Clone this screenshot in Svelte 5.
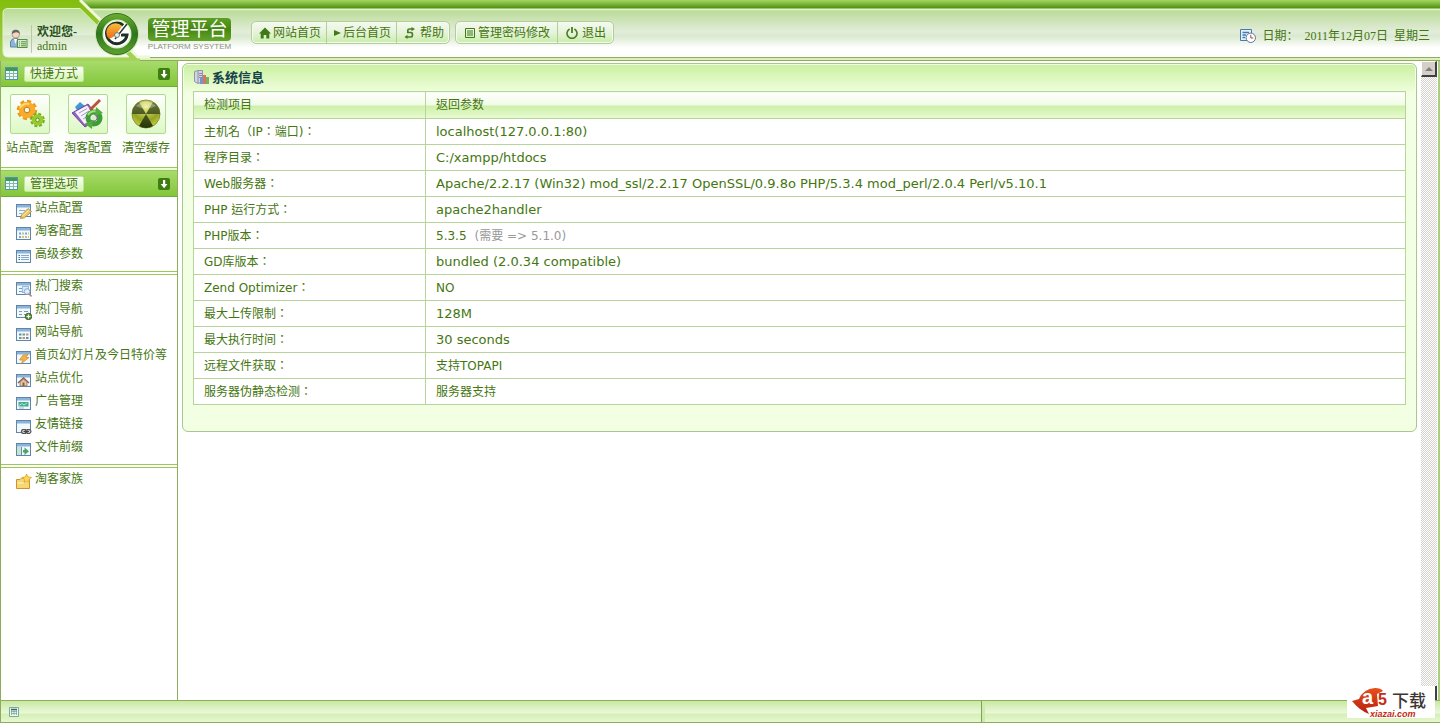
<script>
	const navGroups = [
		[
			{ icon: 'home', label: '网站首页' },
			{ icon: 'play', label: '后台首页' },
			{ icon: 'help', label: '帮助' }
		],
		[
			{ icon: 'list', label: '管理密码修改' },
			{ icon: 'power', label: '退出' }
		]
	];

	const shortcuts = [
		{ icon: 'gears', label: '站点配置' },
		{ icon: 'notepad', label: '淘客配置' },
		{ icon: 'nuclear', label: '清空缓存' }
	];

	const menus = [
		[
			{ icon: 'edit', label: '站点配置' },
			{ icon: 'grid', label: '淘客配置' },
			{ icon: 'lines', label: '高级参数' }
		],
		[
			{ icon: 'search', label: '热门搜索' },
			{ icon: 'add', label: '热门导航' },
			{ icon: 'tiles', label: '网站导航' },
			{ icon: 'flash', label: '首页幻灯片及今日特价等' },
			{ icon: 'house', label: '站点优化' },
			{ icon: 'banner', label: '广告管理' },
			{ icon: 'chain', label: '友情链接' },
			{ icon: 'arrow', label: '文件前缀' }
		],
		[{ icon: 'folder', label: '淘客家族' }]
	];

	const info = [
		{ name: '主机名（IP：端口)：', value: 'localhost(127.0.0.1:80)', latin: true },
		{ name: '程序目录：', value: 'C:/xampp/htdocs', latin: true },
		{
			name: 'Web服务器：',
			value: 'Apache/2.2.17 (Win32) mod_ssl/2.2.17 OpenSSL/0.9.8o PHP/5.3.4 mod_perl/2.0.4 Perl/v5.10.1',
			latin: true
		},
		{ name: 'PHP 运行方式：', value: 'apache2handler', latin: true },
		{ name: 'PHP版本：', value: '5.3.5', note: '(需要 => 5.1.0)' },
		{ name: 'GD库版本：', value: 'bundled (2.0.34 compatible)', latin: true },
		{ name: 'Zend Optimizer：', value: 'NO' },
		{ name: '最大上传限制：', value: '128M', latin: true },
		{ name: '最大执行时间：', value: '30 seconds', latin: true },
		{ name: '远程文件获取：', value: '支持TOPAPI' },
		{ name: '服务器伪静态检测：', value: '服务器支持' }
	];
</script>

{#snippet navIcon(kind)}
	<svg class="nav-icon {kind}" viewBox="0 0 12 12" aria-hidden="true">
		{#if kind === 'home'}
			<path d="M6 0.5 L12 6.5 H10.3 V11.5 H7.3 V8 H4.7 V11.5 H1.7 V6.5 H0 Z" fill="#3f7a16" />
		{:else if kind === 'play'}
			<path d="M0 1 L12 6 L0 11 Z" fill="#3f7a16" />
		{:else if kind === 'help'}
			<path d="M8 2 H5.5 Q3.8 2 3.8 3.5 V5.5 H7 Q8.4 5.5 8.4 7 V8.5 Q8.4 10 7 10 H3" fill="none" stroke="#4a7d24" stroke-width="1.7" />
			<path d="M7.5 0 L11 2 L7.5 4.3 Z M3.5 7.8 L0.5 10 L3.5 12 Z" fill="#4a7d24" />
		{:else if kind === 'list'}
			<path d="M1.5 1.5 H10.5 V10.5 H1.5 Z M3 4 H9 M3 6 H9 M3 8 H9" fill="none" stroke="#3f7a16" />
		{:else}
			<path d="M3.6 2 A5 5 0 1 0 8.4 2" fill="none" stroke="#4a7d24" stroke-width="1.6" />
			<path d="M6 0 V6" stroke="#4a7d24" stroke-width="1.8" />
		{/if}
	</svg>
{/snippet}

{#snippet sheetIcon()}
	<svg class="sheet" viewBox="0 0 14 14" aria-hidden="true">
		<rect x="0.5" y="0.5" width="12" height="12" fill="#eefbff" stroke="#5b8fb0" />
		<rect x="1" y="1" width="11" height="3" fill="#3c9a58" />
		<path d="M1 6.5 H12 M1 9.5 H12 M4.5 4 V12 M8.5 4 V12" stroke="#84b9a5" />
	</svg>
{/snippet}

{#snippet downIcon()}
	<svg class="down" viewBox="0 0 12 12" aria-hidden="true">
		<rect width="12" height="12" rx="2" fill="#3e7d12" />
		<path d="M5 2 H7.2 V6 H9.5 L6.1 10.2 L2.7 6 H5 Z" fill="#fff" />
	</svg>
{/snippet}

{#snippet menuIcon(kind)}
	<svg class="menu-icon" viewBox="0 0 16 16" aria-hidden="true">
		{#if kind === 'folder'}
			<path d="M0.5 5.5 H4 L5.5 4 H9 L10 5.5 H13.5 V14.5 H0.5 Z" fill="#f7d774" stroke="#c9962c" />
			<path d="M1.5 9 H8 L9 7.5 H13" stroke="#fff6c8" fill="none" />
			<path d="M10.5 0 L12 3 L15.5 3.4 L13 5.6 L13.5 8.5 L10.5 7 L8 8.5 L8.5 5.6 L6 3.4 L9.3 3 Z" fill="#ffd94f" stroke="#cf9a2c" stroke-width="0.7" />
		{:else}
			<rect x="0.5" y="1.5" width="14" height="12" fill="#f3f8fd" stroke="#5f86aa" />
			<rect x="1" y="2" width="13" height="2.5" fill="#8cb3d8" />
			{#if kind === 'edit'}
				<path d="M3 7.5 H9 M3 10.5 H6" stroke="#8fb0d2" />
				<path d="M4.5 15.5 L5.5 12 L12 5.5 L15.5 8.5 L8.5 14.8 Z" fill="#eacb67" stroke="#a38334" stroke-width="0.8" />
				<path d="M6.5 13 L13 7" stroke="#fff0a9" />
			{:else if kind === 'grid'}
				<path d="M3 7.5 H5 M3 11 H5 M9 7.5 H11" stroke="#7ba8d6" stroke-width="2" />
				<path d="M6 7.5 H8 M9 11 H11" stroke="#bccb73" stroke-width="2" />
				<path d="M12 7.5 H13 M6 11 H8 M12 11 H13" stroke="#e6bd7c" stroke-width="2" />
			{:else if kind === 'lines'}
				<path d="M5 6.5 H13 M5 8.5 H13 M5 10.5 H13" stroke="#88a8c8" />
				<path d="M2.5 6.5 H4 M2.5 8.5 H4 M2.5 10.5 H4" stroke="#416a98" />
			{:else if kind === 'search'}
				<path d="M3 7.5 H6 M3 10.5 H6" stroke="#779dc4" />
				<rect x="6.5" y="5.5" width="6" height="6" fill="#d9eafa" stroke="#9cbbdc" />
				<circle cx="11" cy="10.5" r="2.8" fill="#dceefe" stroke="#8ca9ca" />
				<path d="M13 12.8 L15.5 15.5" stroke="#b98470" stroke-width="1.6" />
			{:else if kind === 'add'}
				<path d="M3 7.5 H6 M8 7.5 H12 M3 10.5 H6 M8 10.5 H10" stroke="#779dc4" />
				<circle cx="12.5" cy="12.5" r="3.2" fill="#5b8e3d" stroke="#3b6627" />
				<path d="M12.5 10.5 V14.5 M10.5 12.5 H14.5" stroke="#fff" stroke-width="1.2" />
			{:else if kind === 'tiles'}
				<path d="M3 7.5 H5.5 M10 11 H12.5" stroke="#648fbd" stroke-width="2.2" />
				<path d="M6.5 7.5 H9 M3 11 H5.5" stroke="#6d9e88" stroke-width="2.2" />
				<path d="M10 7.5 H12.5 M6.5 11 H9" stroke="#c99476" stroke-width="2.2" />
			{:else if kind === 'flash'}
				<path d="M7 5 L12 4.5 L10 7.5 H13 L5 14 L7 10 H3.5 Z" fill="#f2b24c" stroke="#cf8d30" stroke-width="0.7" />
			{:else if kind === 'house'}
				<path d="M2 10 L7.5 5 L13 10" stroke="#a05e46" stroke-width="1.6" fill="none" />
				<path d="M4 9 L7.5 6.5 L11 9 V13 H4 Z" fill="#e5c9a8" stroke="#91735a" stroke-width="0.8" />
				<rect x="6.5" y="9.5" width="2" height="3.5" fill="#7a6553" />
			{:else if kind === 'banner'}
				<rect x="2.5" y="6" width="10" height="4.5" fill="#42a98c" />
				<path d="M3 9.5 L6 7.5 L8 9 L11 7" stroke="#b9e9d2" fill="none" />
				<path d="M3 12 H8" stroke="#9db9d3" />
			{:else if kind === 'chain'}
				<path d="M6.5 10.5 H9.5 V14.5 H6.5 Q4.5 12.5 6.5 10.5 Z M11 10.5 H13.5 Q16.5 12.5 13.5 14.5 H11 Z" fill="#ddd" stroke="#555" stroke-width="1.2" />
				<path d="M7.5 12.5 H13" stroke="#444" stroke-width="1.4" />
			{:else if kind === 'arrow'}
				<rect x="1" y="5" width="4" height="8" fill="#c7e4ce" />
				<path d="M5.5 5 V13" stroke="#658fb3" />
				<path d="M7 8 H8.5 V5.5 L13 9.2 L8.5 13 V10.5 H7 Z" fill="#48a568" />
			{/if}
		{/if}
	</svg>
{/snippet}

{#snippet bigIcon(kind)}
	<svg class="big-icon" viewBox="0 0 32 32" aria-hidden="true">
		{#if kind === 'gears'}
			<circle cx="13" cy="12" r="8.2" fill="none" stroke="#ee971d" stroke-width="4" stroke-dasharray="3.8 2.6" />
			<circle cx="13" cy="12" r="5.6" fill="none" stroke="#f9ab2b" stroke-width="5.4" />
			<path d="M6 10 Q9 5 15 6" fill="none" stroke="#ffdc70" stroke-width="2" />
			<circle cx="13" cy="12" r="2.8" fill="#f3fbe5" stroke="#c87012" />
			<circle cx="23.5" cy="22" r="5.8" fill="none" stroke="#76a923" stroke-width="3" stroke-dasharray="2.8 1.75" />
			<circle cx="23.5" cy="22" r="3.9" fill="none" stroke="#95cc2d" stroke-width="3.8" />
			<circle cx="23.5" cy="22" r="1.8" fill="#efffd5" stroke="#638c18" />
		{:else if kind === 'notepad'}
			<path d="M3 9 L8 4 L14 9 L8 17 Z" fill="#3e9ad6" />
			<path d="M0 15 L16 6 L27 20 L13 29 Z" fill="#9165be" stroke="#6d469a" />
			<path d="M3 14 L15 7.5 L24 19 L12.5 26 Z" fill="#f6f2ff" />
			<path d="M7 15 L15 10.5 M9 18 L17 13 M11 21 L18 16.5" stroke="#a79aba" />
			<path d="M17 11 L27 1 L29 3 L19 13 Z" fill="#bc513a" />
			<circle cx="22" cy="20" r="6" fill="none" stroke="#3e9e35" stroke-width="5" />
			<path d="M16 17 Q19 12.5 24 13.5" stroke="#a4df80" stroke-width="2" fill="none" />
			<path d="M24 9 L31 15 L23 18 Z M20 31 L13 26 L21 22 Z" fill="#54ac40" />
			<circle cx="22" cy="20" r="2.5" fill="#d8ecc9" />
		{:else}
			<defs>
				<radialGradient id="ball" cx="0.5" cy="0.25" r="0.8">
					<stop offset="0" stop-color="#e8ed83" />
					<stop offset="0.6" stop-color="#94a321" />
					<stop offset="1" stop-color="#d2df48" />
				</radialGradient>
				<linearGradient id="blade" x2="0" y2="1">
					<stop offset="0" stop-color="#6d7838" />
					<stop offset="1" stop-color="#243508" />
				</linearGradient>
			</defs>
			<circle cx="16" cy="16" r="14" fill="url(#ball)" stroke="#77812c" stroke-width="0.8" />
			<path d="M16 16 L9 3.9 A14 14 0 0 0 2 16 Z M16 16 L23 3.9 A14 14 0 0 1 30 16 Z M16 16 L9 28.1 A14 14 0 0 0 23 28.1 Z" fill="url(#blade)" />
			<path d="M6 8 Q16 -1 26 8 Q16 13 6 8 Z" fill="#fff" opacity="0.3" />
		{/if}
	</svg>
{/snippet}

<div class="page">
	<header>
		<svg class="art" viewBox="0 0 150 61" aria-hidden="true">
			<defs>
				<linearGradient id="corner" x2="0" y2="1">
					<stop offset="0" stop-color="#83bd0c" />
					<stop offset="1" stop-color="#a6d35b" />
				</linearGradient>
				<linearGradient id="tab" x2="0" y2="1">
					<stop offset="0" stop-color="#b8dc92" />
					<stop offset="0.55" stop-color="#e3efd9" />
					<stop offset="0.56" stop-color="#d5e6c7" />
					<stop offset="1" stop-color="#fafdf7" />
				</linearGradient>
				<linearGradient id="ring" x2="0" y2="1">
					<stop offset="0" stop-color="#6cae30" />
					<stop offset="0.5" stop-color="#2c751c" />
					<stop offset="1" stop-color="#5ea22f" />
				</linearGradient>
				<linearGradient id="orange" x2="0" y2="1">
					<stop offset="0" stop-color="#f8bc3c" />
					<stop offset="1" stop-color="#ef6b10" />
				</linearGradient>
			</defs>
			<path d="M0 0 H81 L140 58 V61 H0 Z" fill="url(#corner)" />
			<path d="M80 0 L138 57 H150" fill="none" stroke="#f0f8da" stroke-width="3" />
			<path d="M8 8.5 H80 L129 57 H8 Q3 57 3 52 V13 Q3 8.5 8 8.5 Z" fill="url(#tab)" stroke="#e2f3c5" />
			<circle cx="117" cy="34" r="22" fill="#c8e3a8" />
			<circle cx="117" cy="34" r="20.5" fill="url(#ring)" stroke="#326f1c" />
			<circle cx="117" cy="34" r="14.5" fill="#dff1c6" />
			<circle cx="117" cy="34" r="13" fill="#fff" />
			<path d="M124 26 A10.3 10.3 0 1 0 127 35 H121" fill="none" stroke="#1d3028" stroke-width="3" />
			<path d="M122 26 A9 9 0 0 0 109 39 L117 35 Z" fill="url(#orange)" />
			<path d="M113 41 L126 25" stroke="#fff" stroke-width="4" />
			<path d="M115 39 L127 24" stroke="#26372f" stroke-width="1.5" />
			<circle cx="117" cy="35" r="2.5" fill="#e7e8e2" stroke="#707f73" />
		</svg>
		<div class="user">
			<svg class="user-icon" viewBox="0 0 18 20" aria-hidden="true">
				<path d="M0.5 18 V13 Q1 9.5 5.5 9.5 Q10 9.5 10 13 V18 Z" fill="#8fb5d3" stroke="#5a87ad" />
				<path d="M4 10 L5.5 15 L7 10" fill="#fff" />
				<circle cx="5.8" cy="5.2" r="3.8" fill="#f5d5bd" stroke="#947264" stroke-width="0.6" />
				<path d="M1.8 5 Q2 0.5 6 0.8 Q10 1 9.8 5 Q8 2.8 5 3.5 Z" fill="#666" />
				<rect x="7.5" y="10.5" width="9.5" height="8" fill="#d9efc8" stroke="#598d49" />
				<path d="M9 12.8 H10 M11 12.8 H16 M9 14.8 H10 M11 14.8 H16 M9 16.8 H10 M11 16.8 H16" stroke="#578c44" />
			</svg>
			<div class="who">
				<b>欢迎您-</b>
				<span>admin</span>
			</div>
		</div>
		<div class="brand">
			<strong>管理平台</strong>
			<small>PLATFORM SYSYTEM</small>
		</div>
		<nav>
			{#each navGroups as group}
				<div class="nav-group">
					{#each group as item}
						<a href="#top">{@render navIcon(item.icon)}{item.label}</a>
					{/each}
				</div>
			{/each}
		</nav>
		<div class="date">
			<svg viewBox="0 0 16 16" aria-hidden="true">
				<path d="M0.5 1.5 H11.5 V12.5 H0.5 Z" fill="#e3f1fb" stroke="#467da8" />
				<path d="M2.5 4.5 H9 M2.5 7 H6 M2.5 9.5 H5" stroke="#467da8" stroke-width="1.3" />
				<circle cx="10.8" cy="9.8" r="4.7" fill="#fff" stroke="#66749b" />
				<path d="M10.8 6.8 V10 H13.3" fill="none" stroke="#b44444" />
			</svg>
			<span>日期：</span>
			<span>2011年12月07日</span>
			<span>星期三</span>
		</div>
	</header>

	<div class="body">
		<aside>
			<h2>{@render sheetIcon()}<span>快捷方式</span>{@render downIcon()}</h2>
			<div class="shortcuts">
				{#each shortcuts as item}
					<a href="#top"><i>{@render bigIcon(item.icon)}</i>{item.label}</a>
				{/each}
			</div>
			<h2>{@render sheetIcon()}<span>管理选项</span>{@render downIcon()}</h2>
			{#each menus as menu}
				<ul>
					{#each menu as item}
						<li><a href="#top">{@render menuIcon(item.icon)}<span>{item.label}</span></a></li>
					{/each}
				</ul>
			{/each}
		</aside>

		<main>
			<section>
				<h1>
					<svg viewBox="0 0 16 16" aria-hidden="true">
						<path d="M1.5 1.5 L5 0.5 H9.5 V12 L5 13.5 L1.5 11.5 Z" fill="#d3d5e4" stroke="#9294ac" />
						<path d="M5 1 V13 M6 3.5 H9 M6 5.5 H9 M6 7.5 H9" stroke="#8a8ca5" />
						<rect x="7" y="8" width="3" height="6" fill="#6b97d2" />
						<rect x="10" y="5" width="3" height="9" fill="#d97364" />
						<rect x="13" y="7" width="3" height="7" fill="#76b35c" />
					</svg>
					系统信息
				</h1>
				<table>
					<thead>
						<tr><th>检测项目</th><th>返回参数</th></tr>
					</thead>
					<tbody>
						{#each info as row}
							<tr>
								<td>{row.name}</td>
								<td class:latin={row.latin}>{row.value}{#if row.note}<em>{row.note}</em>{/if}</td>
							</tr>
						{/each}
					</tbody>
				</table>
			</section>
		</main>

		<div class="scrollbar">
			<button aria-label="向上滚动"><svg viewBox="0 0 8 4" aria-hidden="true"><path d="M0 4 L4 0 L8 4 Z" fill="#808080" /></svg></button>
			<div class="track-end"></div>
		</div>
	</div>

	<footer>
		<div class="status">
			<svg viewBox="0 0 10 10" aria-hidden="true">
				<path d="M0.5 0.5 H9.5 V9.5 H0.5 Z" fill="#e9f8ed" stroke="#7ca9a1" />
				<path d="M2 2.5 H8" stroke="#376b60" stroke-width="1.5" />
				<path d="M2 4.5 H8 M2 6.5 H8 M2.5 3 V8 M5 3 V8 M7.5 3 V8" stroke="#769e98" stroke-width="0.7" />
			</svg>
		</div>
		<div></div>
	</footer>

	<div class="watermark">
		<svg viewBox="0 0 88 31" aria-hidden="true">
			<defs>
				<linearGradient id="flame" x2="0" y2="1">
					<stop offset="0" stop-color="#e8501c" />
					<stop offset="1" stop-color="#b41f10" />
				</linearGradient>
			</defs>
			<path d="M5 14 L12 12 Q16 2 28 1 Q34 1 36 4 L30 7 L31 19 L19 21 L22 27 Q12 23 5 14 Z" fill="url(#flame)" />
			<text x="15" y="17" class="wm-a">a</text>
			<text x="31" y="18" class="wm-5">5</text>
			<text x="45" y="20" class="wm-cn">下载</text>
			<text x="23" y="30" class="wm-url">xiazai.com</text>
		</svg>
	</div>
</div>

<style>
	:global(body) {
		margin: 0;
	}
	.page {
		position: relative;
		display: flex;
		flex-direction: column;
		min-height: 100vh;
		color: #44760f;
		font: 12px/16px 'DejaVu Sans', 'Noto Sans CJK TC', sans-serif;
		background: #fff;
	}
	a {
		color: inherit;
		text-decoration: none;
	}
	svg {
		display: block;
		flex: none;
	}

	header {
		position: relative;
		display: flex;
		box-sizing: border-box;
		height: 61px;
		padding: 9px 10px 4px 0;
		font-family: 'Liberation Serif', 'Noto Sans CJK SC', sans-serif;
		background:
			linear-gradient(#8fae5c, #8fae5c) 0 57px / 100% 1px no-repeat,
			linear-gradient(#8fae5c, #8fae5c) 0 60px / 100% 1px no-repeat,
			linear-gradient(#dff0bd, #dff0bd) 0 57px / 100% 4px no-repeat,
			linear-gradient(#a5d564, #7ab638 4px, #528f16 8px, #eafad0 9px, #bcdc9a 11px, #e2edda 32px, #dbe9cf 36px, #fff 48px, #fff);
	}
	.art {
		position: absolute;
		left: 0;
		top: 0;
		width: 150px;
		height: 61px;
	}
	.user {
		position: relative;
		display: flex;
		align-items: center;
		gap: 3px;
		width: 138px;
		padding: 12px 0 0 10px;
		box-sizing: border-box;
	}
	.user-icon {
		width: 18px;
		height: 20px;
	}
	.who {
		display: flex;
		flex-direction: column;
		padding-left: 5px;
		border-left: 1px solid #b7c9a7;
		line-height: 14px;
	}
	.who b {
		color: #27501b;
	}
	.brand {
		display: flex;
		flex-direction: column;
		align-items: center;
		width: 83px;
		margin: 9px 20px 0 10px;
	}
	.brand strong {
		width: 100%;
		border-radius: 4px;
		color: #fff;
		font-size: 19px;
		font-weight: 400;
		line-height: 23px;
		text-align: center;
		background: linear-gradient(#5d9e24, #468713 50%, #63a52a);
	}
	.brand small {
		color: #8b8f86;
		font: 8px/11px 'Liberation Sans', sans-serif;
		white-space: nowrap;
	}

	nav {
		display: flex;
		align-items: flex-start;
		gap: 5px;
		padding-top: 12px;
	}
	.nav-group {
		display: flex;
		border: 1px solid #b3cd99;
		border-radius: 5px;
		background: linear-gradient(#f4faef, #e6f3da 50%, #c8edaa);
		box-shadow: inset 0 0 0 1px #f4fbee;
	}
	.nav-group a {
		display: flex;
		align-items: center;
		gap: 2px;
		height: 21px;
		padding: 0 5px 0 7px;
		white-space: nowrap;
	}
	.nav-group:last-child a {
		padding: 0 7px 0 8px;
	}
	.nav-group a + a {
		border-left: 1px solid #b3cd99;
	}
	.nav-icon {
		width: 12px;
		height: 12px;
	}
	.nav-icon.play {
		width: 7px;
	}
	.nav-icon.help,
	.nav-icon.power {
		margin-right: 2px;
	}
	.date {
		display: flex;
		align-items: center;
		gap: 6px;
		margin-left: auto;
		padding-top: 6px;
	}
	.date svg {
		width: 16px;
		height: 16px;
	}

	.body {
		display: flex;
		flex: 1;
		border-right: 2px solid #a8cf7d;
	}
	aside {
		flex: none;
		width: 176px;
		border: solid #8fae5c;
		border-width: 0 1px;
	}
	h2 {
		display: flex;
		align-items: center;
		gap: 5px;
		box-sizing: border-box;
		height: 26px;
		margin: 0;
		padding: 0 7px 0 4px;
		border-bottom: 1px solid #72a840;
		font-size: 12px;
		font-weight: 400;
		background: linear-gradient(#a8db6c, #83c63a);
	}
	h2 span {
		padding: 0 5px;
		border: 1px solid #bfe59a;
		border-radius: 2px;
		line-height: 14px;
		background: linear-gradient(#fafff2, #d7f5b4);
	}
	.sheet {
		width: 14px;
		height: 14px;
	}
	.down {
		width: 12px;
		height: 12px;
		margin-left: auto;
	}
	.shortcuts {
		display: flex;
		justify-content: space-between;
		padding: 7px 7px 11px 5px;
		border-bottom: 4px double #9cc759;
		background: linear-gradient(#eaffd9, #fff 60px);
	}
	.shortcuts a {
		display: flex;
		flex-direction: column;
		align-items: center;
		gap: 6px;
		white-space: nowrap;
	}
	.shortcuts i {
		padding: 3px;
		border: 1px solid #b3d893;
		border-radius: 2px;
		background: linear-gradient(#fff, #dcf8c3);
	}
	.big-icon {
		width: 32px;
		height: 32px;
	}
	ul {
		margin: 0;
		padding: 0 0 5px 15px;
		list-style: none;
	}
	ul + ul {
		border-top: 4px double #9cc759;
	}
	li a {
		display: flex;
		gap: 3px;
		height: 23px;
		white-space: nowrap;
	}
	li span {
		padding-top: 3px;
	}
	.menu-icon {
		width: 16px;
		height: 16px;
		margin-top: 6px;
	}

	main {
		flex: 1;
		padding: 2px 4px;
	}
	section {
		padding: 0 10px 26px;
		border: 1px solid #a9c68c;
		border-radius: 6px;
		background: linear-gradient(#caf09f, #f2ffe2 30px, #f2ffe2);
		box-shadow: inset 0 0 0 1px #f4ffe8;
	}
	h1 {
		display: flex;
		align-items: center;
		gap: 3px;
		height: 27px;
		margin: 0;
		color: #144349;
		font-size: 13px;
		font-weight: 700;
	}
	h1 svg {
		width: 16px;
		height: 16px;
	}
	table {
		width: 100%;
		border-collapse: collapse;
		table-layout: fixed;
		background: #fff;
	}
	th,
	td {
		height: 25px;
		padding: 0 10px;
		border: 1px solid #b7d49a;
		font-weight: 400;
		text-align: left;
	}
	th {
		height: 26px;
		background: linear-gradient(#fff, #f0fbe3 50%, #cdefa9 51%, #e8fbd2);
	}
	th:first-child {
		width: 211px;
	}
	.latin {
		font-size: 13px;
	}
	em {
		margin-left: 8px;
		color: #999;
		font-style: normal;
	}

	.scrollbar {
		display: flex;
		flex-direction: column;
		justify-content: space-between;
		width: 16px;
		margin-right: 1px;
		background: repeating-conic-gradient(#d6d3ce 0 25%, #fff 0 50%) 0 0 / 2px 2px;
	}
	.scrollbar button {
		display: flex;
		align-items: center;
		justify-content: center;
		width: 16px;
		height: 16px;
		padding: 0;
		border: solid;
		border-width: 1px 2px 2px 1px;
		border-color: #fff #404040 #404040 #fff;
		background: #d4d0c8;
	}
	.scrollbar button svg {
		width: 8px;
		height: 4px;
	}
	.track-end {
		height: 14px;
		border-right: 2px solid #404040;
		background: #fff;
	}

	footer {
		display: grid;
		grid-template-columns: 981px 1fr;
		gap: 3px;
		box-sizing: border-box;
		height: 23px;
		border: 1px solid #8fae5c;
		border-width: 1px 0 1px 1px;
		background: #cfe9ae;
	}
	footer div {
		background: linear-gradient(#c9e8a4, #eaf8d9 12px, #d5efb6 13px, #e6f8d0);
	}
	footer .status {
		display: flex;
		align-items: center;
		padding-left: 8px;
		border-right: 1px solid #7da352;
	}
	.status svg {
		width: 10px;
		height: 10px;
	}

	.watermark {
		position: absolute;
		right: 5px;
		bottom: 5px;
		background: #fff;
	}
	.watermark svg {
		width: 88px;
		height: 31px;
	}
	text {
		font-family: 'Liberation Sans', 'Noto Sans CJK SC', sans-serif;
	}
	.wm-a {
		fill: #fff;
		font-size: 20px;
		font-weight: 700;
	}
	.wm-5 {
		fill: #c92c14;
		font-size: 16px;
		font-weight: 700;
	}
	.wm-cn {
		fill: #3d3535;
		font-size: 17px;
		font-weight: 500;
	}
	.wm-url {
		fill: #c32a16;
		font-size: 9px;
		font-style: italic;
		font-weight: 700;
	}
</style>
